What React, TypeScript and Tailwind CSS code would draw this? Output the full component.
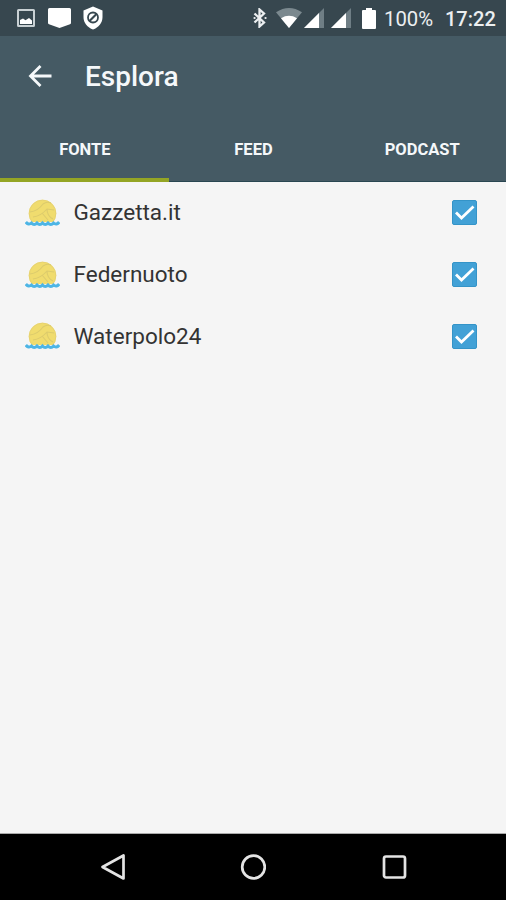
import { useState } from 'react'

const tabs = ['FONTE', 'FEED', 'PODCAST']

const initialSources = [
  { name: 'Gazzetta.it', checked: true },
  { name: 'Federnuoto', checked: true },
  { name: 'Waterpolo24', checked: true },
]

function SignalIcon() {
  return (
    <svg width="20" height="20" viewBox="0 0 20 20">
      <path d="M0 20 20 0v20z" fill="#6f7e85" />
      <path d="M0 20 15 5v15z" fill="#fff" />
    </svg>
  )
}

function StatusBar() {
  return (
    <div className="flex h-9 shrink-0 items-center bg-[#37474f] pl-[17px] pr-[10px] text-[#eceff1]">
      <svg width="18" height="18" viewBox="0 0 18 18">
        <rect x="1" y="1" width="16" height="16" rx="0.5" fill="none" stroke="#c9d1d4" strokeWidth="2" />
        <path d="M3 15v-4l3-1.500 2.500 1.700L12 9l3 2.500V15z" fill="#fff" />
      </svg>
      <svg className="ml-[13px]" width="23" height="20" viewBox="0 0 23 20">
        <path d="M1.500 0h20q1.500 0 1.500 1.500V15q0 1-1 1.300L11.500 20 1 16.300Q0 16 0 15V1.500Q0 0 1.500 0z" fill="#fff" />
      </svg>
      <svg className="ml-3" width="20" height="24" viewBox="0 0 20 24">
        <path d="M10 .5 19.500 4.500V11c0 6-4 10.500-9.500 12.500C4.500 21.500.5 17 .5 11V4.500z" fill="#fff" />
        <circle cx="10" cy="11.500" r="5" fill="none" stroke="#37474f" strokeWidth="1.800" />
        <path d="m6.500 15 7-7" stroke="#37474f" strokeWidth="2.200" />
      </svg>
      <div className="ml-auto flex items-center">
        <svg width="14" height="20" viewBox="0 0 14 20">
          <path d="m1.500 5.500 9.500 9-4.500 4V1.500l4.500 4-9.500 9" fill="none" stroke="#eceff1" strokeWidth="2.300" />
          <path d="M1.500 10h.1M12.500 10h.1" stroke="#eceff1" strokeWidth="2.200" strokeLinecap="round" />
        </svg>
        <svg className="ml-[9px]" width="26" height="20" viewBox="0 0 26 20">
          <path d="M13 20 0 4.300Q13-4.300 26 4.300z" fill="#7b898f" />
          <path d="M13 20 5 10.200Q13 5.500 21 10.200z" fill="#fff" />
        </svg>
        <div className="ml-[2px] flex gap-[7px]">
          <SignalIcon />
          <SignalIcon />
        </div>
        <svg className="ml-[11px]" width="14" height="21" viewBox="0 0 14 21">
          <path d="M4 0h6v2h3q1 0 1 1V20q0 1-1 1H1q-1 0-1-1V3q0-1 1-1h3z" fill="#fff" />
        </svg>
        <span className="ml-2 w-[49px] pt-px text-[20.300px] leading-6">100%</span>
        <span className="ml-3 w-[51px] pt-px text-[20px] font-medium leading-6">17:22</span>
      </div>
    </div>
  )
}

function BallIcon() {
  return (
    <svg width="35" height="28" viewBox="0 0 35 28">
      <circle cx="17.500" cy="14.500" r="13.700" fill="#f0dc6e" />
      <circle cx="17.500" cy="14.500" r="13.300" fill="none" stroke="#e3cf72" strokeWidth="0.800" />
      <path
        d="M5 13q8-1 13-8 4-3 8-1M8 18q8-1 14-8l7 1M17 14l6 7M22 10q0 7 6 10"
        fill="none"
        stroke="#dccb6c"
        strokeWidth="1.100"
      />
      <path d="M1 23h33v5H1z" fill="#f5f5f5" />
      <path
        d="M.8 23q2.800 3.500 5.600 1 2.800 3 5.600 0 2.800 3 5.500 0 2.800 3 5.500 0 2.800 3 5.600 0 2.800 2.500 5.600-1"
        fill="none"
        stroke="#4db5e5"
        strokeWidth="3"
      />
    </svg>
  )
}

export default function App() {
  const [activeTab, setActiveTab] = useState('FONTE')
  const [sources, setSources] = useState(initialSources)

  const toggle = (name: string) =>
    setSources(prev => prev.map(s => (s.name === name ? { ...s, checked: !s.checked } : s)))

  return (
    <div className="flex h-[900px] w-[506px] flex-col bg-[#f5f5f5] font-['Roboto',sans-serif]">
      <StatusBar />

      <header className="shrink-0 bg-[#455a64] text-[#f5f8fa]">
        <div className="flex h-20 items-center pl-7">
          <svg width="24" height="23" viewBox="0 0 24 23" fill="none" stroke="currentColor" strokeWidth="2.800">
            <path d="M23.500 11H2.500M12.500 1 2.500 11l10 10" />
          </svg>
          <h1 className="ml-[33px] pt-0.5 text-[28px] font-medium leading-8">Esplora</h1>
        </div>
        <nav className="grid h-[66px] grid-cols-3 border-b border-[#294651]">
          {tabs.map(tab => (
            <button
              key={tab}
              onClick={() => setActiveTab(tab)}
              className={`relative flex items-center justify-center pl-px pt-[3px] text-[16.500px] font-bold ${
                activeTab === tab
                  ? 'after:absolute after:inset-x-0 after:-bottom-px after:h-1 after:bg-[#94a524]'
                  : ''
              }`}
            >
              {tab}
            </button>
          ))}
        </nav>
      </header>

      <main className="flex-1">
        {sources.map(source => (
          <div key={source.name} className="flex h-[61.800px] items-center pl-[25px] pr-[29px]">
            <BallIcon />
            <span className="ml-[13.500px] text-[22.500px] text-[#333]">{source.name}</span>
            <button
              aria-label={source.name}
              onClick={() => toggle(source.name)}
              className="ml-auto flex size-[25px] items-center justify-center rounded-[2px] border border-[#3494c8] bg-[#42a1d6]"
            >
              {source.checked && (
                <svg width="21" height="21" viewBox="0 0 21 21" fill="none" stroke="#fff" strokeWidth="2.800">
                  <path d="m2 10.500 5.500 5.500L19.500 4.500" />
                </svg>
              )}
            </button>
          </div>
        ))}
      </main>

      <footer className="flex h-[67px] shrink-0 items-center border-t border-[#aaa] bg-black">
        <svg className="ml-[100px]" width="25" height="26" viewBox="0 0 25 26">
          <path d="M2.500 13 23.500 1.500v23z" fill="none" stroke="#e4e4e4" strokeWidth="2.700" strokeLinejoin="round" />
        </svg>
        <svg className="ml-[115px]" width="26" height="26" viewBox="0 0 26 26">
          <circle cx="13.500" cy="13" r="11.300" fill="none" stroke="#e4e4e4" strokeWidth="2.700" />
        </svg>
        <svg className="ml-[115.500px]" width="25" height="25" viewBox="0 0 25 25">
          <rect x="2" y="1.500" width="21" height="21" rx="2" fill="none" stroke="#e4e4e4" strokeWidth="2.700" />
        </svg>
      </footer>
    </div>
  )
}
